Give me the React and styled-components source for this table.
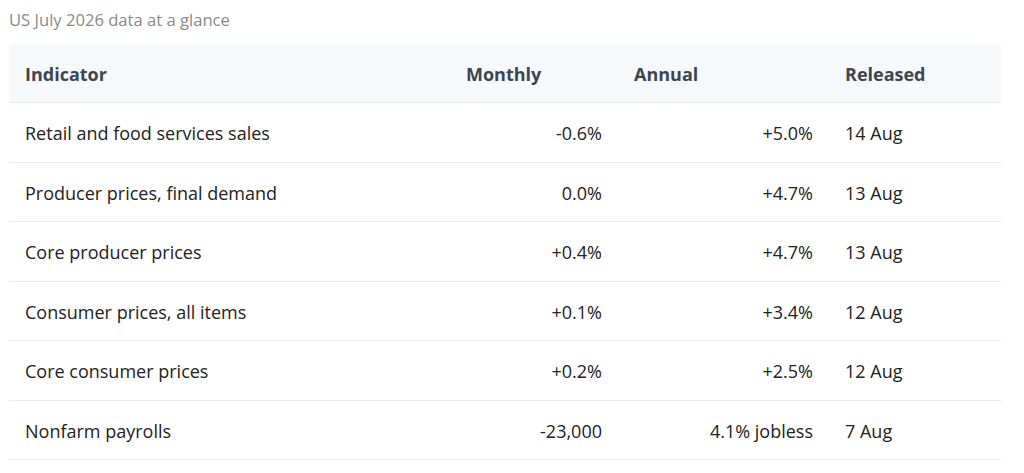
import React from 'react';
import styled, { createGlobalStyle } from 'styled-components';

const rows = [
  { name: 'Retail and food services sales', monthly: '-0.6%', annual: '+5.0%', released: '14 Aug' },
  { name: 'Producer prices, final demand', monthly: '0.0%', annual: '+4.7%', released: '13 Aug' },
  { name: 'Core producer prices', monthly: '+0.4%', annual: '+4.7%', released: '13 Aug' },
  { name: 'Consumer prices, all items', monthly: '+0.1%', annual: '+3.4%', released: '12 Aug' },
  { name: 'Core consumer prices', monthly: '+0.2%', annual: '+2.5%', released: '12 Aug' },
  { name: 'Nonfarm payrolls', monthly: '-23,000', annual: '4.1% jobless', released: '7 Aug' },
];

const GlobalStyle = createGlobalStyle`
  body {
    margin: 0;
    background: #ffffff;
    font-family: 'Open Sans', 'Noto Sans', sans-serif;
  }
`;

const App = () => {
  return (
    <Page>
      <GlobalStyle />
      <Caption>US July 2026 data at a glance</Caption>
      <Table>
        <HeaderRow>
          <HeadCell>Indicator</HeadCell>
          <HeadCell>Monthly</HeadCell>
          <HeadCell>Annual</HeadCell>
          <HeadCell>Released</HeadCell>
        </HeaderRow>
        {rows.map((row) => (
          <Row key={row.name}>
            <Cell>{row.name}</Cell>
            <Cell align="right">{row.monthly}</Cell>
            <Cell align="right">{row.annual}</Cell>
            <Cell>{row.released}</Cell>
          </Row>
        ))}
      </Table>
    </Page>
  );
};

export default App;

const Page = styled.div`
  padding: 8px 23px 0 9px;
`;

const Caption = styled.div`
  color: #8a8a8a;
  font-size: 16.6px;
  line-height: 24px;
  height: 36px;
`;

const Table = styled.div`
  display: flex;
  flex-direction: column;
`;

const HeaderRow = styled.div`
  display: grid;
  grid-template-columns: 441px 168px 211px 1fr;
  height: 58px;
  align-items: center;
  background: #f6f9fc;
  border-bottom: 1px solid #e3e8ee;
`;

const Row = styled.div`
  display: grid;
  grid-template-columns: 441px 168px 211px 1fr;
  height: 58.5px;
  align-items: center;
  border-bottom: 1px solid #e8ebef;
`;

const HeadCell = styled.div`
  padding: 1px 16px 0;
  color: #3d4551;
  font-size: 18px;
  font-weight: 700;
`;

const Cell = styled.div`
  padding: 2px 16px 0;
  color: #222222;
  font-size: 18px;
  text-align: ${(props) => props.align || 'left'};
`;
